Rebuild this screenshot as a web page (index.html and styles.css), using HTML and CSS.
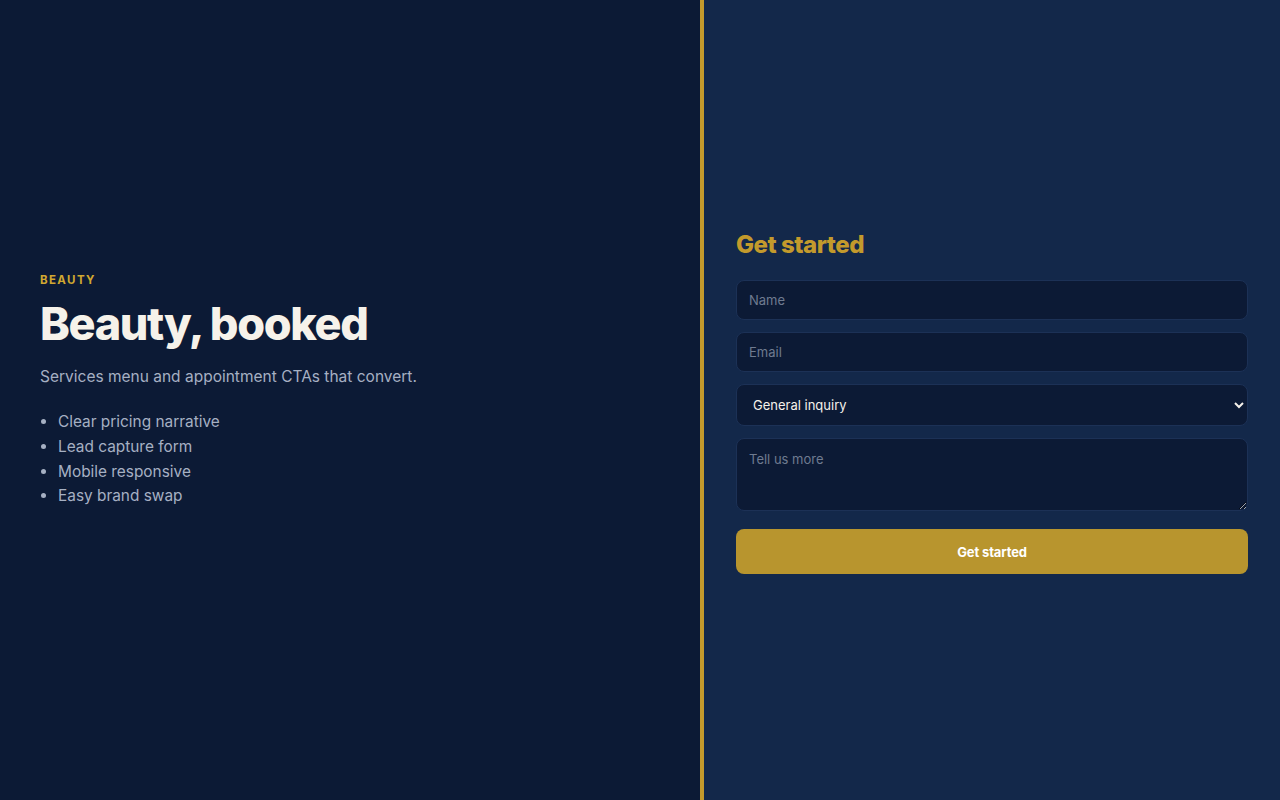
FILE: index.html
```html
<!DOCTYPE html>
<html lang="en">
<head>
    <meta charset="UTF-8">
    <meta name="viewport" content="width=device-width, initial-scale=1.0">
    <title>Beauty, booked</title>
    <link rel="stylesheet" href="styles.css">
</head>
<body>
    <main class="split">
        <section class="intro">
            <div class="intro-inner">
                <p class="eyebrow">Beauty</p>
                <h1>Beauty, booked</h1>
                <p class="lead">Services menu and appointment CTAs that convert.</p>
                <ul class="features">
                    <li>Clear pricing narrative</li>
                    <li>Lead capture form</li>
                    <li>Mobile responsive</li>
                    <li>Easy brand swap</li>
                </ul>
            </div>
        </section>

        <section class="signup">
            <form class="lead-form" onsubmit="return false;">
                <h2>Get started</h2>
                <input type="text" placeholder="Name">
                <input type="email" placeholder="Email">
                <select>
                    <option>General inquiry</option>
                    <option>Book an appointment</option>
                    <option>Pricing</option>
                </select>
                <textarea placeholder="Tell us more"></textarea>
                <button type="submit">Get started</button>
            </form>
        </section>
    </main>
</body>
</html>
```

FILE: styles.css
```css
* {
    margin: 0;
    padding: 0;
    box-sizing: border-box;
}

body {
    font-family: Inter, "Noto Sans", sans-serif;
    background: #0c1a35;
    color: #f5f1ea;
    height: 100vh;
}

.split {
    display: grid;
    grid-template-columns: 704px 1fr;
    height: 100vh;
}

/* left column */
.intro {
    background: #0c1a35;
    border-right: 4px solid #c39a2c;
    display: flex;
    align-items: center;
    padding: 0 40px;
}

.intro-inner {
    margin-bottom: 18px;
}

.eyebrow {
    font-size: 11.5px;
    font-weight: 700;
    letter-spacing: 0.12em;
    text-transform: uppercase;
    color: #d1a830;
    margin-bottom: 10px;
}

.intro h1 {
    font-size: 45px;
    font-weight: 800;
    letter-spacing: -0.03em;
    line-height: 1.2;
    color: #f6f2ea;
    margin-bottom: 16px;
}

.lead {
    font-size: 15.5px;
    color: #a6b0c3;
    margin-bottom: 24px;
}

.features {
    list-style: disc;
    padding-left: 18px;
    font-size: 15.4px;
    line-height: 1.6;
    color: #a6b0c3;
}

/* right column */
.signup {
    background: #13284a;
    display: flex;
    align-items: center;
    padding: 0 32px;
}

.lead-form {
    width: 100%;
    display: flex;
    flex-direction: column;
    gap: 12px;
    padding-top: 4px;
}

.lead-form h2 {
    font-size: 24px;
    font-weight: 800;
    letter-spacing: -0.02em;
    color: #c39a2c;
    margin-bottom: 9px;
}

input, select, textarea {
    font-family: inherit;
    font-size: 13px;
    color: #f5f1ea;
    background: #0c1a35;
    border: 1px solid #1c3156;
    border-radius: 8px;
    padding: 0 12px;
    outline: none;
}

input {
    height: 40px;
}

input::placeholder, textarea::placeholder {
    color: #6f7b90;
}

select {
    height: 42px;
    color-scheme: dark;
}

textarea {
    height: 73px;
    padding: 12px;
    resize: vertical;
}

button {
    margin-top: 6px;
    height: 45px;
    background: #b8952e;
    color: #fff;
    border: none;
    border-radius: 8px;
    font-family: inherit;
    font-size: 13px;
    font-weight: 700;
    letter-spacing: -0.01em;
    cursor: pointer;
}
```
